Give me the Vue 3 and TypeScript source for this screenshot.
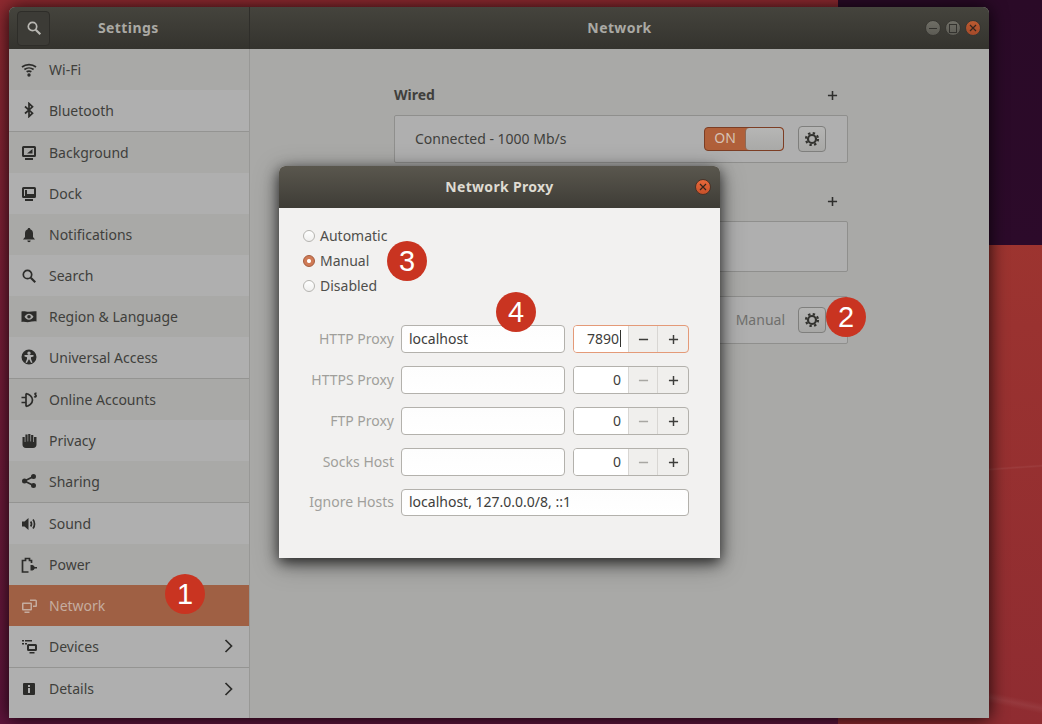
<template>
  <div class="desktop">
    <div class="window">
      <header class="titlebar">
        <div class="titlebar-left">
          <button class="search-btn">
            <svg class="icon light" viewBox="0 0 16 16"><circle cx="6.5" cy="6.5" r="4.2" class="line" /><path d="M9.700 9.700l4.600 4.600" class="line thick" /></svg>
          </button>
          <span class="title settings-title">Settings</span>
        </div>
        <div class="titlebar-right">
          <span class="title">Network</span>
          <div class="wm-buttons">
            <span class="wm-btn"><i class="wm-min"></i></span>
            <span class="wm-btn"><i class="wm-max"></i></span>
            <span class="wm-btn wm-close">
              <svg class="cross" viewBox="0 0 8 8"><path d="M1 1l6 6M7 1l-6 6" /></svg>
            </span>
          </div>
        </div>
      </header>

      <div class="body">
        <!-- sidebar -->
        <nav class="sidebar">
          <div
            v-for="item in menu"
            :key="item.name"
            class="row"
            :class="{ dark: item.dark, selected: item.name === 'Network', sep: item.sep }"
          >
            <svg class="icon" viewBox="0 0 16 16">
              <path v-if="item.fill" :d="item.fill" fill="currentColor" fill-rule="evenodd" />
              <path v-if="item.line" :d="item.line" class="line" />
            </svg>
            <span class="row-name">{{ item.name }}</span>
            <svg v-if="item.more" class="chevron" viewBox="0 0 8 14"><path d="M1 1l6 6-6 6" class="line" /></svg>
          </div>
        </nav>

        <!-- network panel -->
        <main class="panel">
          <div class="panel-col">
            <div class="section-head">
              <span class="section-title">Wired</span>
              <svg class="plus low" viewBox="0 0 12 12"><path :d="plusPath" /></svg>
            </div>
            <div class="box wired">
              <span class="connected">Connected - 1000 Mb/s</span>
              <div class="switch"><span class="on">ON</span><span class="knob"></span></div>
              <button class="gear-btn">
                <svg class="gear" viewBox="0 0 16 16"><circle cx="8" cy="8" r="4" /><circle cx="8" cy="8" r="6" class="teeth" /></svg>
              </button>
            </div>
            <div class="section-head second">
              <span class="section-title"></span>
              <svg class="plus" viewBox="0 0 12 12"><path :d="plusPath" /></svg>
            </div>
            <div class="box vpn"></div>
            <div class="box proxy">
              <span class="proxy-state">Manual</span>
              <button class="gear-btn">
                <svg class="gear" viewBox="0 0 16 16"><circle cx="8" cy="8" r="4" /><circle cx="8" cy="8" r="6" class="teeth" /></svg>
              </button>
            </div>
          </div>
        </main>
      </div>
    </div>

    <!-- modal dialog -->
    <section class="dialog">
      <header class="dialog-bar">
        <span class="dialog-title">Network Proxy</span>
        <span class="dialog-close">
          <svg class="cross" viewBox="0 0 8 8"><path d="M1 1l6 6M7 1l-6 6" /></svg>
        </span>
      </header>
      <div class="dialog-body">
        <div class="radios">
          <label v-for="r in radios" :key="r" class="radio-row">
            <span class="radio" :class="{ checked: r === 'Manual' }"></span>{{ r }}
          </label>
        </div>
        <div class="form">
          <template v-for="p in proxies" :key="p.label">
            <span class="form-label">{{ p.label }}</span>
            <div class="entry">{{ p.host }}</div>
            <div class="spin" :class="{ focused: p.focused }">
              <span class="spin-value">{{ p.port }}<i v-if="p.focused" class="caret"></i></span>
              <span class="spin-btn" :class="{ off: p.port === 0 }">
                <svg viewBox="0 0 12 12"><path d="M1 6h10" /></svg>
              </span>
              <span class="spin-btn wide">
                <svg viewBox="0 0 12 12"><path :d="plusPath" /></svg>
              </span>
            </div>
          </template>
          <span class="form-label">Ignore Hosts</span>
          <div class="entry ignore">localhost, 127.0.0.0/8, ::1</div>
        </div>
      </div>
    </section>

    <!-- callout numbers -->
    <span v-for="b in badges" :key="b.n" class="badge" :style="{ left: b.x + 'px', top: b.y + 'px' }">{{ b.n }}</span>
  </div>
</template>

<script setup lang="ts">
interface MenuItem {
  name: string
  fill?: string
  line?: string
  dark?: boolean
  sep?: boolean
  more?: boolean
}

const plusPath = 'M1 6h10M6 1v10'

const monitor = 'M2.500 1h11A1.500 1.500 0 0 1 15 2.500v8a1.500 1.500 0 0 1-1.500 1.500h-11A1.500 1.500 0 0 1 1 10.500v-8A1.500 1.500 0 0 1 2.500 1zM3 3v7h10V3zM4 13h8v2H4z'

const menu: MenuItem[] = [
  {
    name: 'Wi-Fi',
    dark: true,
    fill: 'M8 11.300a1.700 1.700 0 1 0 0 3.400A1.700 1.700 0 0 0 8 11.300z',
    line: 'M1 5C5 1.800 11 1.800 15 5M3.400 7.500C6 5.500 10 5.500 12.600 7.500M5.600 9.800C7 8.900 9 8.900 10.400 9.800',
  },
  { name: 'Bluetooth', sep: true, line: 'M4 4.500l7.500 6.700L8 14.500v-13l3.500 3.300L4 11.500' },
  { name: 'Background', dark: true, fill: monitor + 'M6 8.500l5.500-4.500v4.500z' },
  { name: 'Dock', fill: monitor + 'M4 4h2v4h7v2H4z' },
  {
    name: 'Notifications',
    dark: true,
    fill: 'M8 1c-.8 0-1.300.5-1.300 1.200C4.800 2.800 4 4.400 4 6.500V10l-2 2.500h12L12 10V6.500c0-2.100-.8-3.700-2.700-4.300C9.300 1.500 8.800 1 8 1zM6.300 13.500h3.400a1.700 1.700 0 0 1-3.400 0z',
  },
  { name: 'Search', fill: 'M9 10.500l1.500-1.500 4.500 4.500-1.500 1.500z', line: 'M6.500 2.300a4.200 4.200 0 1 0 0 8.400 4.200 4.200 0 0 0 0-8.400z' },
  {
    name: 'Region & Language',
    dark: true,
    fill: 'M.5 2.500c3-1 5 .6 7.500.3s5-1 7.500-.5v10.200c-2.500-.5-5 .2-7.500.6s-4.500-1-7.500-.1zM8 4.800c-2 0-3.800 1.500-4.500 3C4.200 9.300 6 10.800 8 10.800s3.800-1.500 4.500-3C11.800 6.300 10 4.800 8 4.800zm0 1.200a1.800 1.800 0 1 1 0 3.600 1.800 1.800 0 0 1 0-3.600z',
  },
  {
    name: 'Universal Access',
    sep: true,
    fill: 'M8 .5a7.500 7.500 0 1 0 0 15 7.500 7.500 0 0 0 0-15zM8 2.500a1.700 1.700 0 1 1 0 3.400 1.700 1.700 0 0 1 0-3.400zM3.500 6h9v1.400L10 8.200V10l1.500 3.500-1.400.5L8.300 10.500h-.6L5.900 14l-1.400-.5L6 10V8.200l-2.500-.8z',
  },
  {
    name: 'Online Accounts',
    dark: true,
    line: 'M.5 5.500h4.500M.5 10.500h4.500M5 1.500v13M5 1.500c3 .5 6.500 3 6.500 6.500s-3.500 6-6.500 6.500M15.500 1.500c-1-.6-1.800 0-1.300.9s1.300 1 .8 1.900-1.300.5-1.800.1',
  },
  {
    name: 'Privacy',
    fill: 'M1.500 4h2.200v5h.7V1.500h2.200V8.500h.6V1h2.200v7.500h.7V2h2.200v7h.7V4h2.500v7.500c0 2-1.200 3.500-3.500 3.500h-7c-2.200 0-3.500-1.500-3.500-3.500z',
  },
  {
    name: 'Sharing',
    dark: true,
    sep: true,
    fill: 'M3.500 5.500a2.500 2.500 0 1 0 0 5 2.500 2.500 0 0 0 0-5zM12.500 1a2.500 2.500 0 1 0 0 5 2.500 2.500 0 0 0 0-5zM12.500 10a2.500 2.500 0 1 0 0 5 2.500 2.500 0 0 0 0-5z',
    line: 'M3.500 8l9-4.500M3.500 8l9 4.500',
  },
  {
    name: 'Sound',
    fill: 'M1 5.500h2.500L7.500 2v12l-4-3.500H1z',
    line: 'M9.700 5.500c1 1.500 1 3.500 0 5M12 3.500c2 2.500 2 6.500 0 9',
  },
  {
    name: 'Power',
    dark: true,
    fill: 'M9.500 8v5.500h2a3 3 0 0 0 2.200-2H16v-1.500h-2.300a3 3 0 0 0-2.200-2z',
    line: 'M10.500 6V3.500H8.500V1.500H4.500v2H1.500V15h6',
  },
  {
    name: 'Network',
    fill: 'M2 4.500h8A1 1 0 0 1 11 5.500v6a1 1 0 0 1-1 1H2a1 1 0 0 1-1-1v-6a1 1 0 0 1 1-1zM2.500 6v5h7V6zM3.500 13.500h5V15h-5zM9 1.500h5.500A1.500 1.500 0 0 1 16 3v5a1 1 0 0 1-1 1h-3V7.500h2.500V3H9z',
  },
  {
    name: 'Devices',
    more: true,
    sep: true,
    fill: 'M1 2h2v1.500H1zM4 2h7v1.500H4zM1 5h2v1.500H1zM4 5h2v1.500H4zM7 6h7.500A1.500 1.500 0 0 1 16 7.500v4a1.500 1.500 0 0 1-1.500 1.500H7.500A1.500 1.500 0 0 1 6 11.500v-4A1.500 1.500 0 0 1 7.500 6zM8 8v3h6V8zM8.500 14h5v1.500h-5z',
  },
  {
    name: 'Details',
    more: true,
    fill: 'M3 2h10a1 1 0 0 1 1 1v10a1 1 0 0 1-1 1H3a1 1 0 0 1-1-1V3a1 1 0 0 1 1-1zM7 4v2h2V4zM7 7v5h2V7z',
  },
]

const radios = ['Automatic', 'Manual', 'Disabled']

const proxies = [
  { label: 'HTTP Proxy', host: 'localhost', port: 7890, focused: true },
  { label: 'HTTPS Proxy', host: '', port: 0 },
  { label: 'FTP Proxy', host: '', port: 0 },
  { label: 'Socks Host', host: '', port: 0 },
]

const badges = [
  { n: 1, x: 165, y: 574 },
  { n: 2, x: 826, y: 297 },
  { n: 3, x: 387, y: 241 },
  { n: 4, x: 496, y: 292 },
]
</script>

<style>
html,
body {
  margin: 0;
  background: #2a0a28;
}
</style>

<style scoped>
.desktop {
  position: relative;
  width: 1042px;
  height: 724px;
  overflow: hidden;
  padding: 7px 0 0 9px;
  box-sizing: border-box;
  font-family: "Noto Sans", "Open Sans", sans-serif;
  font-size: 14px;
  color: #403f3c;
  background:
    linear-gradient(#2a0a27, #2c0a2a) right top / 204px 245px no-repeat,
    linear-gradient(176deg, transparent 40%, rgba(255, 255, 255, 0.06) 48%, transparent 56%) right 460px / 53px 16px no-repeat,
    linear-gradient(12deg, transparent 30%, rgba(255, 255, 255, 0.06) 45%, transparent 60%) right 688px / 53px 26px no-repeat,
    linear-gradient(#a53a2e 0%, #9a3230 45%, #8f2c31 100%) right top / 204px 724px no-repeat,
    linear-gradient(#8f2a30 0%, #7c1f38 40%, #5e153c 100%);
}
.window {
  width: 980px;
  height: 711px;
  border-radius: 6px 6px 0 0;
  overflow: hidden;
  box-shadow: 0 1px 18px rgba(0, 0, 0, 0.85);
  background: #a9a9a7;
  display: flex;
  flex-direction: column;
}
.titlebar {
  height: 42px;
  flex: none;
  display: flex;
  background: linear-gradient(#45443d, #34332e);
  color: #aaa9a4;
  font-weight: 700;
}
.titlebar-left {
  width: 241px;
  flex: none;
  box-sizing: border-box;
  padding-left: 8px;
  display: flex;
  align-items: center;
  border-right: 1px solid #2f2e2a;
}
.search-btn {
  width: 33px;
  height: 35px;
  padding: 0;
  display: flex;
  align-items: center;
  justify-content: center;
  border: 1px solid #2e2d29;
  border-radius: 4px;
  background: #3c3b36;
}
.settings-title {
  margin-left: 48px;
}
.title {
  font-size: 14px;
  letter-spacing: 0.4px;
  margin-top: -2px;
}
.titlebar-right {
  flex: 1;
  position: relative;
  display: flex;
  align-items: center;
  justify-content: center;
}
.wm-buttons {
  position: absolute;
  right: 8px;
  top: 13px;
  display: flex;
  gap: 4px;
}
.wm-btn {
  width: 16px;
  height: 16px;
  box-sizing: border-box;
  border-radius: 50%;
  border: 1px solid #383732;
  background: linear-gradient(#6f6e66, #5c5b54);
  display: flex;
  align-items: center;
  justify-content: center;
}
.wm-min {
  width: 8px;
  height: 1px;
  background: #33322e;
}
.wm-max {
  width: 6px;
  height: 7px;
  border: 1px solid #33322e;
}
.wm-close {
  background: linear-gradient(#bb5a30, #a44a2a);
}
.cross {
  width: 8px;
  height: 8px;
  fill: none;
  stroke: #33251d;
  stroke-width: 1.2;
}
.body {
  flex: 1;
  min-height: 0;
  display: flex;
}
.sidebar {
  width: 240px;
  flex: none;
  background: #afafaf;
  border-right: 1px solid #989896;
}
.row {
  height: 41px;
  box-sizing: border-box;
  padding-left: 12px;
  display: flex;
  align-items: center;
  background: #afafaf;
}
.row.dark {
  background: #a9a9a7;
}
.row.sep {
  height: 42px;
  padding-bottom: 1px;
  border-bottom: 1px solid #949492;
}
.row.selected {
  background: #9f6044;
  color: #c5ac9f;
}
.row-name {
  margin-left: 12px;
  flex: 1;
}
.icon {
  width: 16px;
  height: 16px;
  flex: none;
  color: #2c2c2a;
}
.icon.light {
  color: #b9b8b3;
}
.row.selected .icon {
  color: #c5ac9f;
}
.line {
  fill: none;
  stroke: currentColor;
  stroke-width: 1.7;
}
.line.thick {
  stroke-width: 2.2;
}
.chevron {
  width: 9px;
  height: 14px;
  margin-right: 16px;
  color: #2c2c2a;
}
.panel {
  flex: 1;
  display: flex;
  padding: 0 141px 0 144px;
}
.panel-col {
  flex: 1;
}
.section-head {
  display: flex;
  justify-content: space-between;
  align-items: center;
  height: 20px;
  margin-top: 35px;
  margin-bottom: 11px;
  padding-right: 10px;
}
.section-head.second {
  margin-top: 28px;
  margin-bottom: 10px;
}
.section-title {
  font-weight: 700;
}
.plus {
  width: 11px;
  height: 11px;
  fill: none;
  stroke: #2e2e2c;
  stroke-width: 1.7;
}
.plus.low {
  margin-top: 2px;
}
.box {
  border: 1px solid #8f8f8d;
  border-radius: 2px;
  background: #afafaf;
  box-sizing: border-box;
  display: flex;
  align-items: center;
}
.wired {
  height: 48px;
  padding: 0 21px 0 20px;
}
.connected {
  flex: 1;
  margin-top: -2px;
}
.vpn {
  height: 51px;
}
.proxy {
  height: 48px;
  margin-top: 24px;
  justify-content: flex-end;
  padding-right: 21px;
}
.proxy-state {
  margin-right: 13px;
  margin-top: -2px;
  color: #6f6f6d;
}
.switch {
  width: 80px;
  height: 24px;
  box-sizing: border-box;
  margin-right: 14px;
  display: flex;
  border: 1px solid #7c3e25;
  border-radius: 4px;
  background: #b0603a;
  overflow: hidden;
}
.on {
  width: 40px;
  text-align: center;
  line-height: 20px;
  color: #d6c2b5;
  font-size: 14px;
}
.knob {
  flex: 1;
  border-left: 1px solid #8c6a58;
  border-radius: 4px;
  background: linear-gradient(#b6b6b5, #a9a9a7);
}
.gear-btn {
  width: 28px;
  height: 26px;
  padding: 0;
  box-sizing: border-box;
  display: flex;
  align-items: center;
  justify-content: center;
  border: 1px solid #7f7f7d;
  border-radius: 4px;
  background: linear-gradient(#b5b5b4, #a8a8a6);
}
.gear {
  width: 16px;
  height: 16px;
  fill: none;
  stroke: #33332f;
  stroke-width: 2.2;
}
.gear .teeth {
  stroke-dasharray: 2.356 2.356;
  stroke-width: 2.2;
}

.dialog {
  position: absolute;
  left: 279px;
  top: 166px;
  width: 441px;
  height: 392px;
  border-radius: 6px 6px 0 0;
  background: #f2f1f0;
  box-shadow: 0 4px 14px rgba(0, 0, 0, 0.7), 0 6px 26px rgba(0, 0, 0, 0.35);
  display: flex;
  flex-direction: column;
}
.dialog-bar {
  height: 42px;
  flex: none;
  display: flex;
  align-items: center;
  justify-content: center;
  position: relative;
  border-radius: 6px 6px 0 0;
  background: linear-gradient(#5a574e, #3e3c36);
}
.dialog-title {
  font-size: 14px;
  font-weight: 700;
  letter-spacing: 0.3px;
  margin-top: -2px;
  color: #dfdbd2;
}
.dialog-close {
  position: absolute;
  right: 9px;
  top: 13px;
  width: 16px;
  height: 16px;
  box-sizing: border-box;
  display: flex;
  align-items: center;
  justify-content: center;
  border-radius: 50%;
  border: 1px solid #4c3226;
  background: linear-gradient(#e8683a, #c7512a);
}
.dialog-body {
  flex: 1;
  padding: 15px 31px 0 24px;
  color: #4f4f4c;
}
.radios {
  display: flex;
  flex-direction: column;
}
.radio-row {
  height: 25px;
  display: flex;
  align-items: center;
  gap: 5px;
}
.radio {
  width: 12px;
  height: 12px;
  box-sizing: border-box;
  border-radius: 50%;
  border: 1px solid #b5b4b0;
  background: linear-gradient(#ffffff, #f0efee);
}
.radio.checked {
  border: 1px solid #a55a3c;
  background: radial-gradient(circle, #fff 0 1.500px, #cf7a55 2.500px);
}
.form {
  margin-top: 27px;
  display: grid;
  grid-template-columns: 90px 164px 116px;
  column-gap: 8px;
  row-gap: 13px;
  align-items: center;
}
.form-label {
  text-align: right;
  color: #a09f9b;
  white-space: nowrap;
  margin-right: -1px;
  margin-top: -2px;
}
.entry {
  height: 28px;
  box-sizing: border-box;
  padding-left: 7px;
  line-height: 25px;
  border: 1px solid #b3b1ac;
  border-radius: 4px;
  background: linear-gradient(#fdfdfd, #ffffff);
  color: #3d3d3b;
}
.entry.ignore {
  grid-column: 2 / 4;
  height: 27px;
  line-height: 24px;
}
.spin {
  height: 28px;
  box-sizing: border-box;
  display: flex;
  border: 1px solid #b3b1ac;
  border-radius: 4px;
  background: #f0efed;
  overflow: hidden;
}
.spin.focused {
  border-color: #e49a78;
}
.spin-value {
  flex: 1;
  padding-right: 7px;
  text-align: right;
  line-height: 25px;
  background: #fff;
  color: #3d3d3b;
}
.caret {
  display: inline-block;
  width: 1px;
  height: 17px;
  margin-left: 1px;
  vertical-align: -3px;
  background: #33332f;
}
.spin-btn {
  width: 29px;
  flex: none;
  box-sizing: border-box;
  display: flex;
  align-items: center;
  justify-content: center;
  border-left: 1px solid #d8d6d3;
}
.spin-btn.wide {
  width: 31px;
}
.spin-btn svg {
  width: 11px;
  height: 11px;
  fill: none;
  stroke: #3d3d3b;
  stroke-width: 1.6;
}
.spin-btn.off svg {
  stroke: #a8a7a3;
}

.badge {
  position: absolute;
  width: 40px;
  height: 40px;
  border-radius: 50%;
  background: #c93421;
  color: #fff;
  text-align: center;
  font-family: "Liberation Sans", sans-serif;
  font-size: 29px;
  line-height: 40px;
}
</style>
